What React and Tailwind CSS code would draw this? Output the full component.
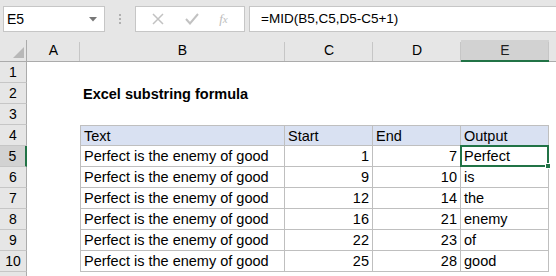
import React from "react";

const rows = [
  ["Perfect is the enemy of good", 1, 7, "Perfect"],
  ["Perfect is the enemy of good", 9, 10, "is"],
  ["Perfect is the enemy of good", 12, 14, "the"],
  ["Perfect is the enemy of good", 16, 21, "enemy"],
  ["Perfect is the enemy of good", 22, 23, "of"],
  ["Perfect is the enemy of good", 25, 28, "good"],
];

const cols = ["A", "B", "C", "D", "E"];

function ColHead({ label, active }) {
  return (
    <div
      className={`relative flex items-center justify-center border-b border-[#ababab] text-[14px] ${
        active ? "bg-[#d2d2d2] text-[#1e1e1e]" : "bg-[#e6e6e6] text-black"
      }`}
    >
      <span className="absolute right-0 top-[2px] bottom-0 w-px bg-[#c6c6c6]" />
      {label}
      {active && <span className="absolute left-0 right-0 -bottom-px h-[2px] bg-[#217346]" />}
    </div>
  );
}

function RowHead({ n, active }) {
  return (
    <div
      className={`relative flex items-center justify-center border-b border-[#c6c6c6] border-r text-[14px] ${
        active ? "bg-[#d2d2d2] border-r-[#217346] border-r-2" : "bg-[#e6e6e6] border-r-[#ababab]"
      }`}
    >
      {n}
    </div>
  );
}

function Cell({ children, right, head, first }) {
  return (
    <div
      className={`flex items-center px-[3px] pt-[2px] border-b border-r border-[#bfbfbf] overflow-hidden whitespace-nowrap ${
        right ? "justify-end" : ""
      } ${head ? "bg-[#d9e1f2] border-t" : ""} ${first ? "border-l" : ""}`}
    >
      {children}
    </div>
  );
}

export default function App() {
  return (
    <div
      className="w-[556px] h-[276px] overflow-hidden bg-white text-black"
      style={{ fontFamily: '"Liberation Sans", Arial, sans-serif' }}
    >
      {/* formula bar */}
      <div className="flex h-[40px] items-start bg-[#e6e6e6] pt-[6px]">
        <div className="ml-[3px] flex h-[26px] w-[102px] items-center justify-between border border-[#c6c6c6] bg-white pl-[3px] pr-[7px] text-[14px]">
          <span>E5</span>
          <svg width="8" height="5" viewBox="0 0 8 5">
            <path d="M0 0h8L4 4.5z" fill="#777" />
          </svg>
        </div>
        <div className="flex w-[30px] flex-col items-center justify-center gap-[2px] self-stretch pb-[8px]">
          <span className="h-[2px] w-[2px] bg-[#b0b0b0]" />
          <span className="h-[2px] w-[2px] bg-[#b0b0b0]" />
          <span className="h-[2px] w-[2px] bg-[#b0b0b0]" />
        </div>
        <div className="flex h-[26px] w-[110px] items-center justify-around border border-[#c6c6c6] bg-white px-[6px]">
          <svg width="12" height="12" viewBox="0 0 12 12">
            <path d="M1 1l10 10M11 1L1 11" stroke="#c2c2c2" strokeWidth="1.5" />
          </svg>
          <svg width="14" height="12" viewBox="0 0 14 12">
            <path d="M1 6l4 4.5L13 1" stroke="#c2c2c2" strokeWidth="2" fill="none" />
          </svg>
          <span
            className="text-[13px] italic text-[#bdbdbd]"
            style={{ fontFamily: '"Liberation Serif", serif' }}
          >
            f<span className="text-[11px]">x</span>
          </span>
        </div>
        <div className="ml-[4px] flex h-[26px] flex-1 items-center border border-r-0 border-[#c6c6c6] bg-white pl-[11px] text-[13.5px]">
          =MID(B5,C5,D5-C5+1)
        </div>
      </div>

      {/* sheet grid */}
      <div className="grid grid-cols-[27px_53px_205px_88px_88px_88px_1fr] grid-rows-[22px_repeat(11,21px)] text-[14.5px]">
        <div className="relative border-b border-r border-[#ababab] bg-[#e6e6e6]">
          <svg className="absolute right-[2px] bottom-[3px]" width="11" height="11" viewBox="0 0 11 11">
            <path d="M11 0v11H0z" fill="#b8b8b8" />
          </svg>
        </div>
        {cols.map((c) => (
          <ColHead key={c} label={c} active={c === "E"} />
        ))}
        <div className="border-b border-[#ababab] bg-[#e6e6e6]" />

        {/* row 1 */}
        <RowHead n={1} />
        <div className="col-span-6" />

        {/* row 2 */}
        <RowHead n={2} />
        <div />
        <div className="col-span-5 flex items-center px-[3px] pt-[2px] font-bold whitespace-nowrap">
          Excel substring formula
        </div>

        {/* row 3 */}
        <RowHead n={3} />
        <div className="col-span-6" />

        {/* row 4 header */}
        <RowHead n={4} />
        <div />
        <Cell head first>Text</Cell>
        <Cell head>Start</Cell>
        <Cell head>End</Cell>
        <Cell head>Output</Cell>
        <div />

        {rows.map((r, i) => (
          <React.Fragment key={i}>
            <RowHead n={i + 5} active={i === 0} />
            <div />
            <Cell first>{r[0]}</Cell>
            <Cell right>{r[1]}</Cell>
            <Cell right>{r[2]}</Cell>
            {i === 0 ? (
              <div className="relative flex items-center border-b border-r border-[#bfbfbf] px-[3px] pt-[2px]">
                <div className="pointer-events-none absolute -left-px -top-px -right-px -bottom-px border-2 border-[#217346]" />
                <div className="absolute -right-[3px] -bottom-[3px] h-[6px] w-[6px] border border-white bg-[#217346]" />
                {r[3]}
              </div>
            ) : (
              <Cell>{r[3]}</Cell>
            )}
            <div />
          </React.Fragment>
        ))}

        {/* row 11, only a sliver shows */}
        <RowHead n="" />
        <div className="col-span-6" />
      </div>
    </div>
  );
}
